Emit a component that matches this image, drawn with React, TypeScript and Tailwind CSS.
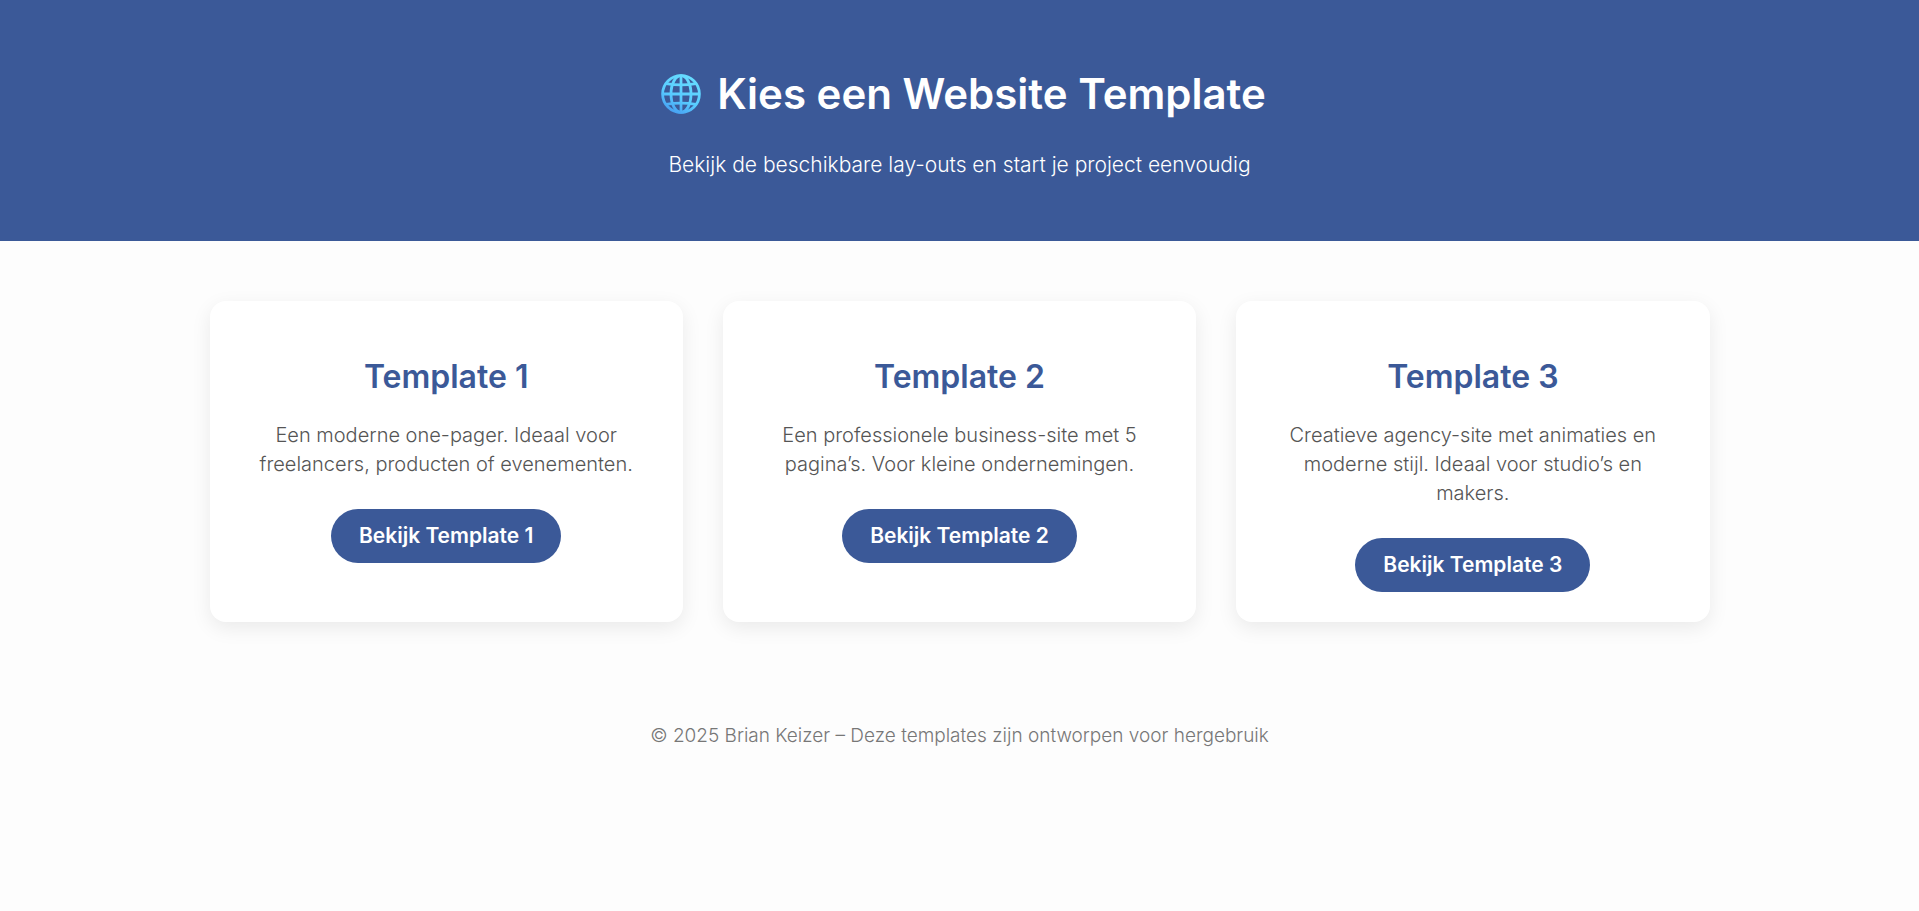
import React from 'react';

interface Template {
  id: number;
  description: string;
  href: string;
}

const templates: Template[] = [
  {
    id: 1,
    description: 'Een moderne one-pager. Ideaal voor freelancers, producten of evenementen.',
    href: '#template1',
  },
  {
    id: 2,
    description: 'Een professionele business-site met 5 pagina’s. Voor kleine ondernemingen.',
    href: '#template2',
  },
  {
    id: 3,
    description: 'Creatieve agency-site met animaties en moderne stijl. Ideaal voor studio’s en makers.',
    href: '#template3',
  },
];

const GlobeIcon: React.FC = () => (
  <svg viewBox="0 0 40 40" className="ml-2 h-10 w-10 shrink-0" fill="none" aria-hidden="true">
    <defs>
      <linearGradient id="globe" x1="28" y1="2" x2="10" y2="38" gradientUnits="userSpaceOnUse">
        <stop stopColor="#66dcff" />
        <stop offset="0.6" stopColor="#58cbff" />
        <stop offset="1" stopColor="#469ff2" />
      </linearGradient>
    </defs>
    <g stroke="url(#globe)" strokeWidth="2.8">
      <circle cx="20" cy="20" r="18.4" />
      <ellipse cx="20" cy="20" rx="10" ry="18.4" />
      <path d="M20.01 2 L20 38" />
      <path d="M2 20.01 L38 20" />
      <path d="M5 9.6 Q20 12 35 9.6" />
      <path d="M5 30.4 Q20 28 35 30.4" />
    </g>
  </svg>
);

const TemplateCard: React.FC<{ template: Template }> = ({ template }) => (
  <article className="rounded-2xl bg-white px-9 pt-[52px] pb-[30px] text-center shadow-[0_6px_20px_rgba(0,0,0,0.08)]">
    <h2 className="mb-5 text-[32px] leading-[48px] font-semibold text-[#3b5998]">
      Template {template.id}
    </h2>
    <p className="mb-[30px] text-xl leading-[29px] font-light text-[#555]">
      {template.description}
    </p>
    <a
      href={template.href}
      className="inline-block rounded-full bg-[#3b5998] px-7 py-[13px] align-top text-[21px] leading-7 font-semibold text-white hover:bg-[#2d4373]"
    >
      Bekijk Template {template.id}
    </a>
  </article>
);

export default function App() {
  return (
    <div className="min-h-screen bg-[#fdfdfd] font-['Inter',sans-serif]">
      <header className="bg-[#3b5998] px-5 pt-16 pb-[59px] text-center text-white">
        <h1 className="mb-6 flex items-center justify-center gap-4 text-[42px] leading-[60px] font-semibold">
          <GlobeIcon />
          Kies een Website Template
        </h1>
        <p className="text-[21px] leading-[34px] font-light">
          Bekijk de beschikbare lay-outs en start je project eenvoudig
        </p>
      </header>

      <main className="mx-auto grid max-w-[1580px] gap-10 px-10 py-[60px] md:grid-cols-3">
        {templates.map((template) => (
          <TemplateCard key={template.id} template={template} />
        ))}
      </main>

      <footer className="px-5 py-10 text-center text-[19px] leading-7 font-light text-[#777]">
        © 2025 Brian Keizer – Deze templates zijn ontworpen voor hergebruik
      </footer>
    </div>
  );
}
